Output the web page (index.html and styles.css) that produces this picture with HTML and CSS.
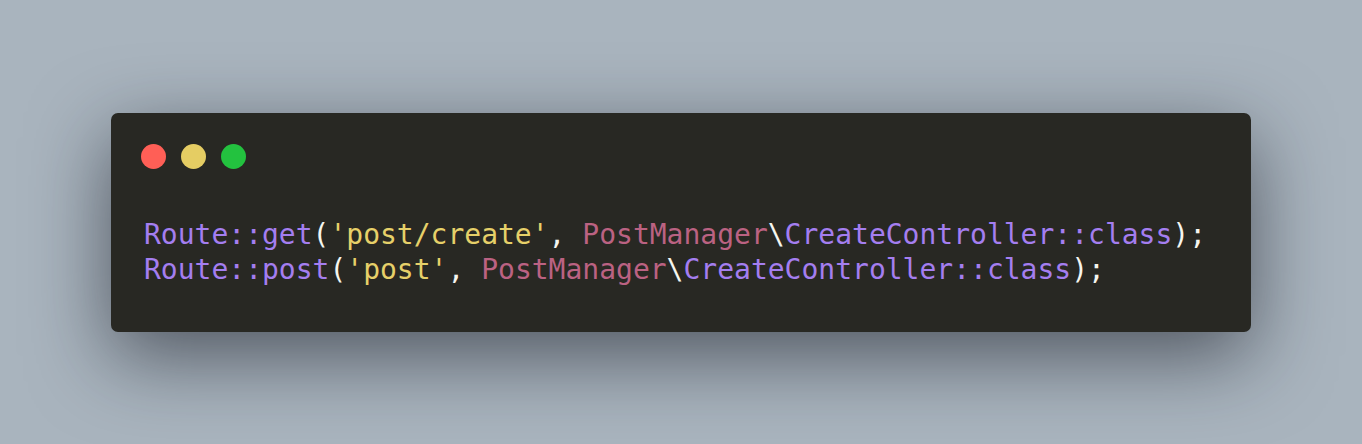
FILE: index.html
```html
<!DOCTYPE html>
<html>
<head>
<meta charset="utf-8">
<link rel="stylesheet" href="styles.css">
</head>
<body>
<div class="stage">
  <div class="window">
    <div class="dots">
      <span class="dot red"></span>
      <span class="dot yellow"></span>
      <span class="dot green"></span>
    </div>
    <pre class="code"><span class="fn">Route::get</span><span class="p">(</span><span class="str">'post/create'</span><span class="p">, </span><span class="ns">PostManager</span><span class="p">\</span><span class="fn">CreateController::class</span><span class="p">);</span>
<span class="fn">Route::post</span><span class="p">(</span><span class="str">'post'</span><span class="p">, </span><span class="ns">PostManager</span><span class="p">\</span><span class="fn">CreateController::class</span><span class="p">);</span></pre>
  </div>
</div>
</body>
</html>
```
FILE: styles.css
```css
html, body {
  margin: 0;
  padding: 0;
}
body {
  background: #a9b4be;
  width: 1362px;
  height: 444px;
  overflow: hidden;
}
.stage {
  height: 444px;
  display: flex;
  align-items: center;
  justify-content: center;
}
.window {
  width: 1140px;
  height: 219px;
  box-sizing: border-box;
  background: #282823;
  border-radius: 7px;
  box-shadow: 0 24px 80px rgba(20, 24, 34, 0.6);
  padding: 31px 30px 0 30px;
}
.dots {
  display: flex;
  gap: 15px;
}
.dot {
  width: 25px;
  height: 25px;
  border-radius: 50%;
  display: block;
}
.red { background: #ff5f56; }
.yellow { background: #e5cd63; }
.green { background: #23c23f; }
.code {
  margin: 48px 0 0 3px;
  font-family: "DejaVu Sans Mono", monospace;
  font-size: 28px;
  line-height: 35px;
  color: #f5f5ef;
}
.fn { color: #a47ef0; }
.str { color: #e6d069; }
.ns { color: #bb6282; }
.p { color: #f5f5ef; }
```
